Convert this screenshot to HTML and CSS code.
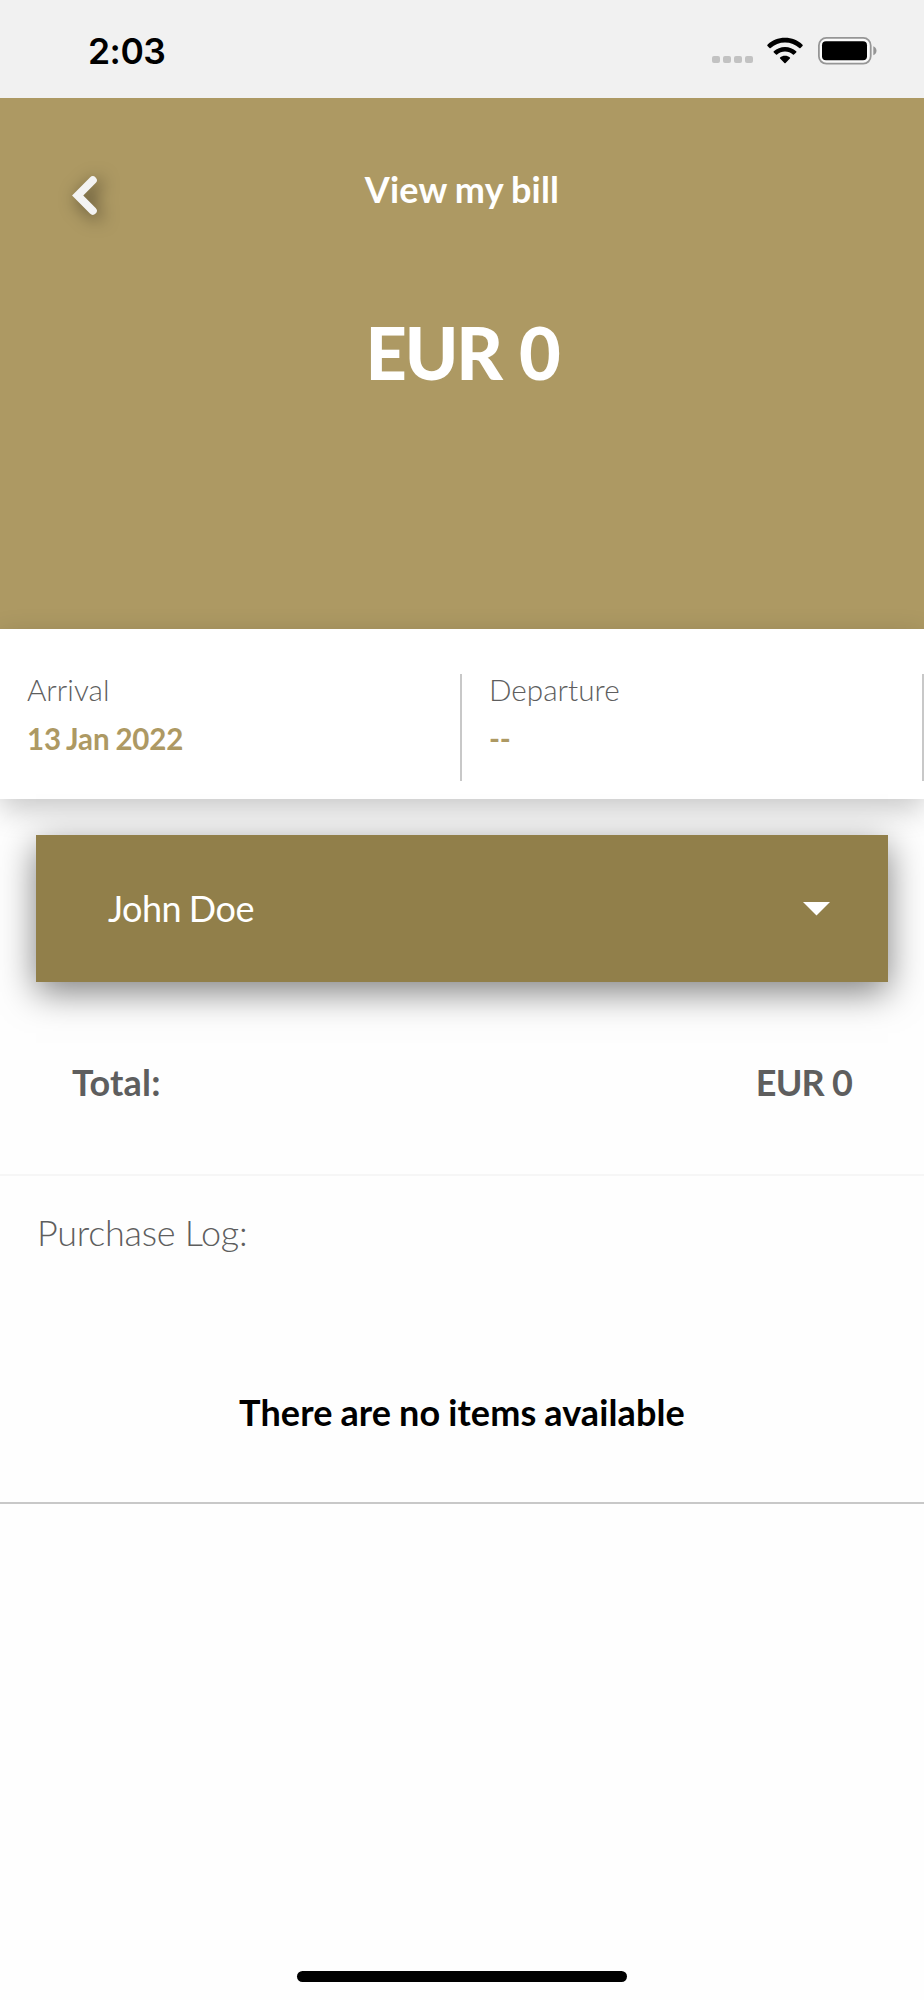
FILE: index.html
```
<!DOCTYPE html>
<html lang="en">
<head>
<meta charset="utf-8">
<title>View my bill</title>
<link rel="stylesheet" href="styles.css">
</head>
<body>
<div class="screen">
  <div class="status">
    <span class="time">2:03</span>
    <div class="indicators">
      <div class="dots"><i></i><i></i><i></i><i></i></div>
      <svg class="wifi" width="36" height="28" viewBox="0 0 36 28">
        <path d="M18 0.8C11.2 0.8 5 3.4 0.5 7.7q-.6.6 0 1.2l2 2.1q.6.6 1.2 0C7.5 7.500 12.500 5.500 18 5.500s10.500 2 14.300 5.500q.6.6 1.200 0l2-2.100q.6-.6 0-1.200C31 3.400 24.800.8 18 .8z"/>
        <path d="M18 9.900c-4.300 0-8.200 1.600-11.200 4.300q-.6.600 0 1.200l2.200 2.200q.5.500 1.100 0c2.100-1.900 4.900-3 7.900-3s5.800 1.100 7.900 3q.6.500 1.100 0l2.200-2.200q.6-.6 0-1.200c-3-2.700-6.900-4.300-11.200-4.300z"/>
        <path d="M18 18.700c-1.900 0-3.600.6-4.900 1.700q-.6.600 0 1.200l4.300 4.400q.6.600 1.200 0l4.300-4.400q.6-.6 0-1.200c-1.300-1.100-3-1.700-4.900-1.700z"/>
      </svg>
      <svg class="battery" width="59" height="28" viewBox="0 0 59 28">
        <rect x=".9" y=".9" width="51.800" height="25.800" rx="7.500" fill="#fafafa" stroke="#969696" stroke-width="1.800"/>
        <rect x="4" y="4.200" width="45" height="19" rx="4"/>
        <path d="M55.300 9.300c2 .7 3.200 2.400 3.200 4.500s-1.200 3.800-3.200 4.500z" fill="#969696"/>
      </svg>
    </div>
  </div>

  <header class="header">
    <div class="navbar">
      <svg class="back" width="24" height="39" viewBox="0 0 24 39">
        <path d="M19.800 4.300 4.700 19.500 19.800 34.700" fill="none" stroke="#f3f3f3" stroke-width="8" stroke-linecap="round"/>
      </svg>
      <h1 class="title">View my bill</h1>
    </div>
    <div class="amount">EUR 0</div>
  </header>

  <section class="dates">
    <div class="date"><span class="label">Arrival</span><span class="value">13 Jan 2022</span></div>
    <div class="date"><span class="label">Departure</span><span class="value">--</span></div>
  </section>

  <main>
    <div class="guest">
      <span>John Doe</span>
      <svg width="27" height="14" viewBox="0 0 27 14"><path d="M0 0h27L13.500 13.500z" fill="#fff"/></svg>
    </div>
    <div class="total"><span class="total-label">Total:</span><span class="total-value">EUR 0</span></div>
    <section class="log">
      <h2 class="log-title">Purchase Log:</h2>
      <p class="empty">There are no items available</p>
    </section>
  </main>
  <div class="home"></div>
</div>
</body>
</html>
```
FILE: styles.css
```
* { box-sizing: border-box; }
body { margin: 0; background: #fefefe; font-family: Lato, sans-serif; }
h1, h2, p { margin: 0; }
svg { display: block; flex: none; }

.screen { width: 924px; height: 2000px; display: flex; flex-direction: column; overflow: hidden; }

.status {
  height: 98px; flex: none; background: #f1f1f1;
  display: flex; justify-content: space-between; align-items: flex-start;
  padding: 0 47px 0 88px;
}
.time { font: 600 35.500px/44px Inter, sans-serif; letter-spacing: -.5px; padding-top: 30px; color: #000; }
.indicators { display: flex; align-items: flex-start; padding-top: 37px; }
.dots { display: flex; gap: 3px; padding-top: 19px; margin-right: 14px; }
.dots i { width: 8px; height: 7px; border-radius: 2px; background: #c2c2c2; }
.wifi { margin-right: 15px; }

.header { height: 531px; flex: none; background: #ad9963; color: #fff; }
.navbar { display: grid; grid-template-columns: 150px 1fr 150px; padding-top: 70px; }
.back { margin: 8px 0 0 73px; overflow: visible; filter: drop-shadow(4px 4px 9px rgba(0, 0, 0, .6)); }
.title { font-size: 36px; line-height: 43px; font-weight: 700; text-align: center; word-spacing: -1px; letter-spacing: .2px; }
.amount { margin-top: 94px; font-size: 72px; line-height: 86px; font-weight: 900; text-align: center; letter-spacing: -2.100px; word-spacing: 3px; }

.dates {
  height: 170px; flex: none; display: flex; padding-top: 45px;
  background: #fff; box-shadow: 0 10px 28px rgba(0, 0, 0, .22); position: relative;
}
.date {
  width: 462px; height: 107px; padding-left: 27px; border-right: 2px solid #c8c8c8;
  display: flex; flex-direction: column;
}
.label { font-size: 29.700px; line-height: 35px; font-weight: 300; color: #5e5e5e; margin-top: -2px; }
.value { font-size: 29.500px; line-height: 35px; font-weight: 700; color: #ad9963; margin-top: 14px; word-spacing: -1px; letter-spacing: -.15px; }

.guest {
  height: 147px; margin: 36px 36px 0; padding: 0 58px 0 72px; position: relative;
  display: flex; justify-content: space-between; align-items: center;
  background: #917f4a; color: #fff; font-size: 36px; line-height: 43px; letter-spacing: -.500px; word-spacing: -1px;
  box-shadow: 0 10px 34px rgba(0, 0, 0, .5);
}
.total {
  height: 194px; padding: 79px 72px 0; display: flex; justify-content: space-between;
  font-size: 36px; line-height: 43px; font-weight: 700; color: #5e5e5e;
  border-bottom: 2px solid #f6f6f6;
}
.total-label { letter-spacing: .2px; }
.total-value { letter-spacing: -.8px; }
.log { height: 328px; border-bottom: 2px solid #c8c8c8; }
.log-title { padding: 35px 36px 0 37px; font-size: 36px; line-height: 43px; font-weight: 300; color: #5e5e5e; letter-spacing: -.250px; }
.empty { margin-top: 137px; font-size: 36px; line-height: 43px; font-weight: 700; text-align: center; color: #000; word-spacing: -1px; letter-spacing: .120px; }

.home { width: 330px; height: 11px; border-radius: 6px; background: #000; margin: auto auto 18px; }
```
